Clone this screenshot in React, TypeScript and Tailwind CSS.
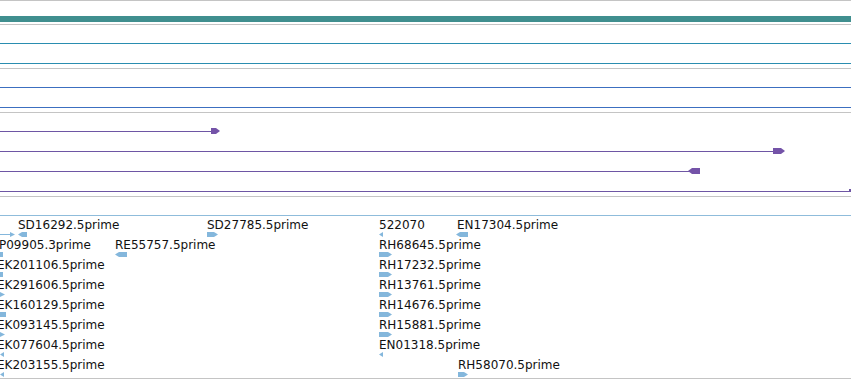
import React from 'react';

type Glyph = 'fwd' | 'rev' | 'box' | 'tipR' | 'tipL' | 'lineR';

type Feature = { x: number; w: number; glyph: Glyph; label?: string; lx?: number };

const FEAT = '#84b7dc';
const PURPLE = '#6e56a4';

const labelRows: Feature[][] = [
  [
    { x: 0, w: 15, glyph: 'lineR' },
    { x: 18, w: 9, glyph: 'rev', label: 'SD16292.5prime' },
    { x: 207, w: 11, glyph: 'fwd', label: 'SD27785.5prime' },
    { x: 379, w: 4, glyph: 'tipL', label: '522070' },
    { x: 456, w: 12, glyph: 'rev', label: 'EN17304.5prime', lx: 457 },
  ],
  [
    { x: 0, w: 3, glyph: 'box', label: 'P09905.3prime', lx: -1 },
    { x: 115, w: 12, glyph: 'rev', label: 'RE55757.5prime' },
    { x: 379, w: 13, glyph: 'fwd', label: 'RH68645.5prime' },
  ],
  [
    { x: 0, w: 3, glyph: 'box', label: 'EK201106.5prime', lx: -3 },
    { x: 379, w: 13, glyph: 'fwd', label: 'RH17232.5prime' },
  ],
  [
    { x: 0, w: 5, glyph: 'tipR', label: 'EK291606.5prime', lx: -3 },
    { x: 379, w: 13, glyph: 'fwd', label: 'RH13761.5prime' },
  ],
  [
    { x: 0, w: 6, glyph: 'box', label: 'EK160129.5prime', lx: -3 },
    { x: 379, w: 13, glyph: 'fwd', label: 'RH14676.5prime' },
  ],
  [
    { x: 0, w: 5, glyph: 'tipR', label: 'EK093145.5prime', lx: -3 },
    { x: 379, w: 13, glyph: 'fwd', label: 'RH15881.5prime' },
  ],
  [
    { x: 0, w: 4, glyph: 'tipL', label: 'EK077604.5prime', lx: -3 },
    { x: 379, w: 4, glyph: 'tipL', label: 'EN01318.5prime' },
  ],
  [
    { x: 0, w: 4, glyph: 'tipL', label: 'EK203155.5prime', lx: -3 },
    { x: 458, w: 10, glyph: 'fwd', label: 'RH58070.5prime' },
  ],
];

const glyphPoints = (g: Glyph, w: number) => {
  switch (g) {
    case 'fwd':
      return `0,0 ${w - 4},0 ${w},2.5 ${w - 4},5 0,5`;
    case 'rev':
      return `4,0 ${w},0 ${w},5 4,5 0,2.5`;
    case 'tipR':
      return `0,0 ${w},2.5 0,5`;
    case 'tipL':
      return `0,2.5 ${w},0 ${w},5`;
    case 'lineR':
      return `${w - 5},0 ${w},2.5 ${w - 5},5`;
    default:
      return `0,0 ${w},0 ${w},5 0,5`;
  }
};

const FeatureGlyph = ({ f }: { f: Feature }) => (
  <svg
    width={f.w}
    height={5}
    className="absolute top-[14px]"
    style={{ left: f.x }}
  >
    {f.glyph === 'lineR' && <rect x={0} y={2} width={f.w - 4} height={1} fill={FEAT} />}
    <polygon points={glyphPoints(f.glyph, f.w)} fill={FEAT} />
  </svg>
);

const Separator = () => <div className="h-px bg-[#c4c4c4]" />;

// plain full-width feature row, line sits 15px down
const LineRow = ({ color }: { color: string }) => (
  <div className="h-[20px] pt-[15px]">
    <div className="h-px" style={{ background: color }} />
  </div>
);

type Transcript = { end: number; head?: 'fwd' | 'rev'; hx?: number; hw?: number };

const transcripts: Transcript[] = [
  { end: 212, head: 'fwd', hx: 211, hw: 9 },
  { end: 774, head: 'fwd', hx: 773, hw: 12 },
  { end: 690, head: 'rev', hx: 688, hw: 12 },
  { end: 851 },
];

const TranscriptRow = ({ t }: { t: Transcript }) => (
  <svg width={851} height={20} className="block">
    <rect x={0} y={15} width={t.end} height={1} fill={PURPLE} />
    {t.head === 'fwd' && t.hx !== undefined && t.hw !== undefined && (
      <polygon
        points={`${t.hx},12 ${t.hx + t.hw - 4},12 ${t.hx + t.hw},15 ${t.hx + t.hw - 4},18 ${t.hx},18`}
        fill="#7453a8"
      />
    )}
    {t.head === 'rev' && t.hx !== undefined && t.hw !== undefined && (
      <polygon
        points={`${t.hx + 4},12 ${t.hx + t.hw},12 ${t.hx + t.hw},18 ${t.hx + 4},18 ${t.hx},15`}
        fill="#7453a8"
      />
    )}
    {!t.head && <rect x={849} y={13} width={2} height={3} fill={PURPLE} />}
  </svg>
);

export default function App() {
  return (
    <div className="w-[851px] h-[380px] bg-white overflow-hidden font-['DejaVu_Sans',sans-serif] text-[12px] text-[#111]">
      {/* reference / gc bar */}
      <Separator />
      <div className="h-[15px]" />
      <div className="h-[6px] bg-[#408f8f]" />
      <div className="h-[2px]" />
      <Separator />

      {/* track: teal genes */}
      <div className="pt-[3px]">
        <LineRow color="#2a8db0" />
        <LineRow color="#2a8db0" />
      </div>
      <Separator />

      {/* track: blue genes */}
      <div className="pt-[3px]">
        <LineRow color="#3c6fc0" />
        <LineRow color="#3c6fc0" />
      </div>
      <Separator />

      {/* track: transcripts */}
      <div className="pt-[3px]">
        {transcripts.map((t, i) => (
          <TranscriptRow key={i} t={t} />
        ))}
      </div>
      <Separator />

      <div className="h-[18px]" />
      <div className="h-px bg-[#8fbcdb]" />

      {/* track: EST labels */}
      <div className="pt-[2px]">
        {labelRows.map((row, i) => (
          <div key={i} className="relative h-[20px]">
            {row.map((f, j) => (
              <React.Fragment key={j}>
                {f.label && (
                  <span
                    className="absolute top-0 leading-[14px] whitespace-nowrap"
                    style={{ left: f.lx ?? f.x }}
                  >
                    {f.label}
                  </span>
                )}
                <FeatureGlyph f={f} />
              </React.Fragment>
            ))}
          </div>
        ))}
      </div>
      <Separator />
    </div>
  );
}
